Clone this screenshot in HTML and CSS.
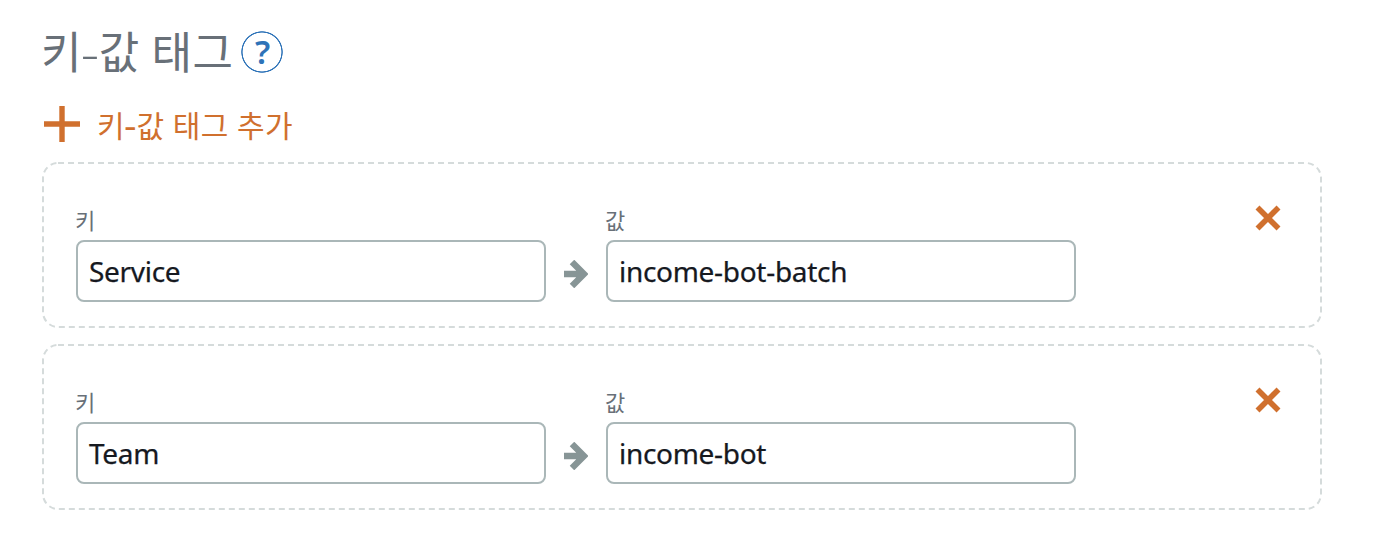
FILE: index.html
```html
<!DOCTYPE html>
<html lang="ko">
<head>
<meta charset="utf-8">
<title>키-값 태그</title>
<link rel="stylesheet" href="styles.css">
</head>
<body>
<main class="tags">
  <header class="heading">
    <h1 class="title">키<span class="dash">-</span>값 태그</h1>
    <span class="help">?</span>
  </header>
  <div class="add">
    <svg class="plus" viewBox="0 0 36 36"><path d="M18 0V36M0 18H36"/></svg>
    <span class="add-label">키<span class="add-dash">-</span>값 태그 추가</span>
  </div>
  <section class="card">
    <svg class="outline"><rect x="1" y="1" width="1278" height="164" rx="15"/></svg>
    <label class="field"><span class="label">키</span><span class="input"><span class="value">Service</span></span></label>
    <svg class="arrow" viewBox="0 0 24 28"><path d="M0 14H19M8 2L20 14L8 26"/></svg>
    <label class="field"><span class="label">값</span><span class="input"><span class="value">income-bot-batch</span></span></label>
    <svg class="remove" viewBox="0 0 26 26"><path d="M2.5 2.5L23.5 23.5M23.5 2.5L2.5 23.5"/></svg>
  </section>
  <section class="card">
    <svg class="outline"><rect x="1" y="1" width="1278" height="164" rx="15"/></svg>
    <label class="field"><span class="label">키</span><span class="input"><span class="value">Team</span></span></label>
    <svg class="arrow" viewBox="0 0 24 28"><path d="M0 14H19M8 2L20 14L8 26"/></svg>
    <label class="field"><span class="label">값</span><span class="input"><span class="value">income-bot</span></span></label>
    <svg class="remove" viewBox="0 0 26 26"><path d="M2.5 2.5L23.5 23.5M23.5 2.5L2.5 23.5"/></svg>
  </section>
</main>
</body>
</html>
```
FILE: styles.css
```css
* { box-sizing: border-box; }
body { margin: 0; background: #fff; font-family: "Noto Sans", "Noto Sans CJK KR", sans-serif; }
.tags { width: 1322px; padding: 22px 0 0 42px; }
.heading { display: flex; height: 60px; align-items: center; gap: 9px; }
.title { margin: 0 0 0 -1px; width: 191px; white-space: nowrap; font-size: 44px; line-height: 60px; font-weight: 400; letter-spacing: 0.5px; color: #687078; }
.dash { display: inline-block; margin-right: 2px; font-weight: 300; transform: translate(1px, 1px) scaleX(1.3); }
.help { display: flex; align-items: center; justify-content: center; width: 42px; height: 42px; padding-left: 1px; background: radial-gradient(circle closest-side, transparent 19.1px, #2e73b8 19.7px, #2e73b8 20.4px, transparent 21px); color: #2e73b8; font-size: 33px; font-weight: 600; line-height: 42px; }
.add { display: flex; align-items: center; height: 44px; margin: 20px 0 16px; padding-left: 2px; gap: 17px; color: #d0702e; }
.plus { width: 36px; height: 36px; fill: none; stroke: #d0702e; stroke-width: 5.4; }
.add-label { padding-top: 3px; font-size: 30px; line-height: 44px; letter-spacing: 0.4px; }
.add-dash { display: inline-block; margin-right: 1.5px; font-weight: 500; transform: translateX(0.5px) scaleX(1.25); }
.card { position: relative; display: flex; height: 166px; margin-bottom: 16px; padding: 43px 41px 0 34px; }
.outline { position: absolute; inset: 0; width: 1280px; height: 166px; fill: none; stroke: #d5dbdb; stroke-width: 2; stroke-dasharray: 6 4; }
.field { display: block; width: 470px; }
.label { display: block; height: 35px; margin-left: -1px; font-size: 22px; line-height: 30px; color: #687078; }
.input { display: flex; align-items: center; height: 62px; padding-left: 11px; border: 2px solid #aab7b8; border-radius: 8px; color: #16191f; background: #fff; }
.value { font-size: 28px; line-height: 40px; letter-spacing: -0.3px; -webkit-text-stroke: 0.25px #16191f; }
.arrow { width: 24px; height: 28px; margin: 55px 18px 0; fill: none; stroke: #879596; stroke-width: 6.4; }
.remove { width: 26px; height: 26px; margin: 0 0 0 auto; fill: none; stroke: #d0702e; stroke-width: 5.6; }
```
